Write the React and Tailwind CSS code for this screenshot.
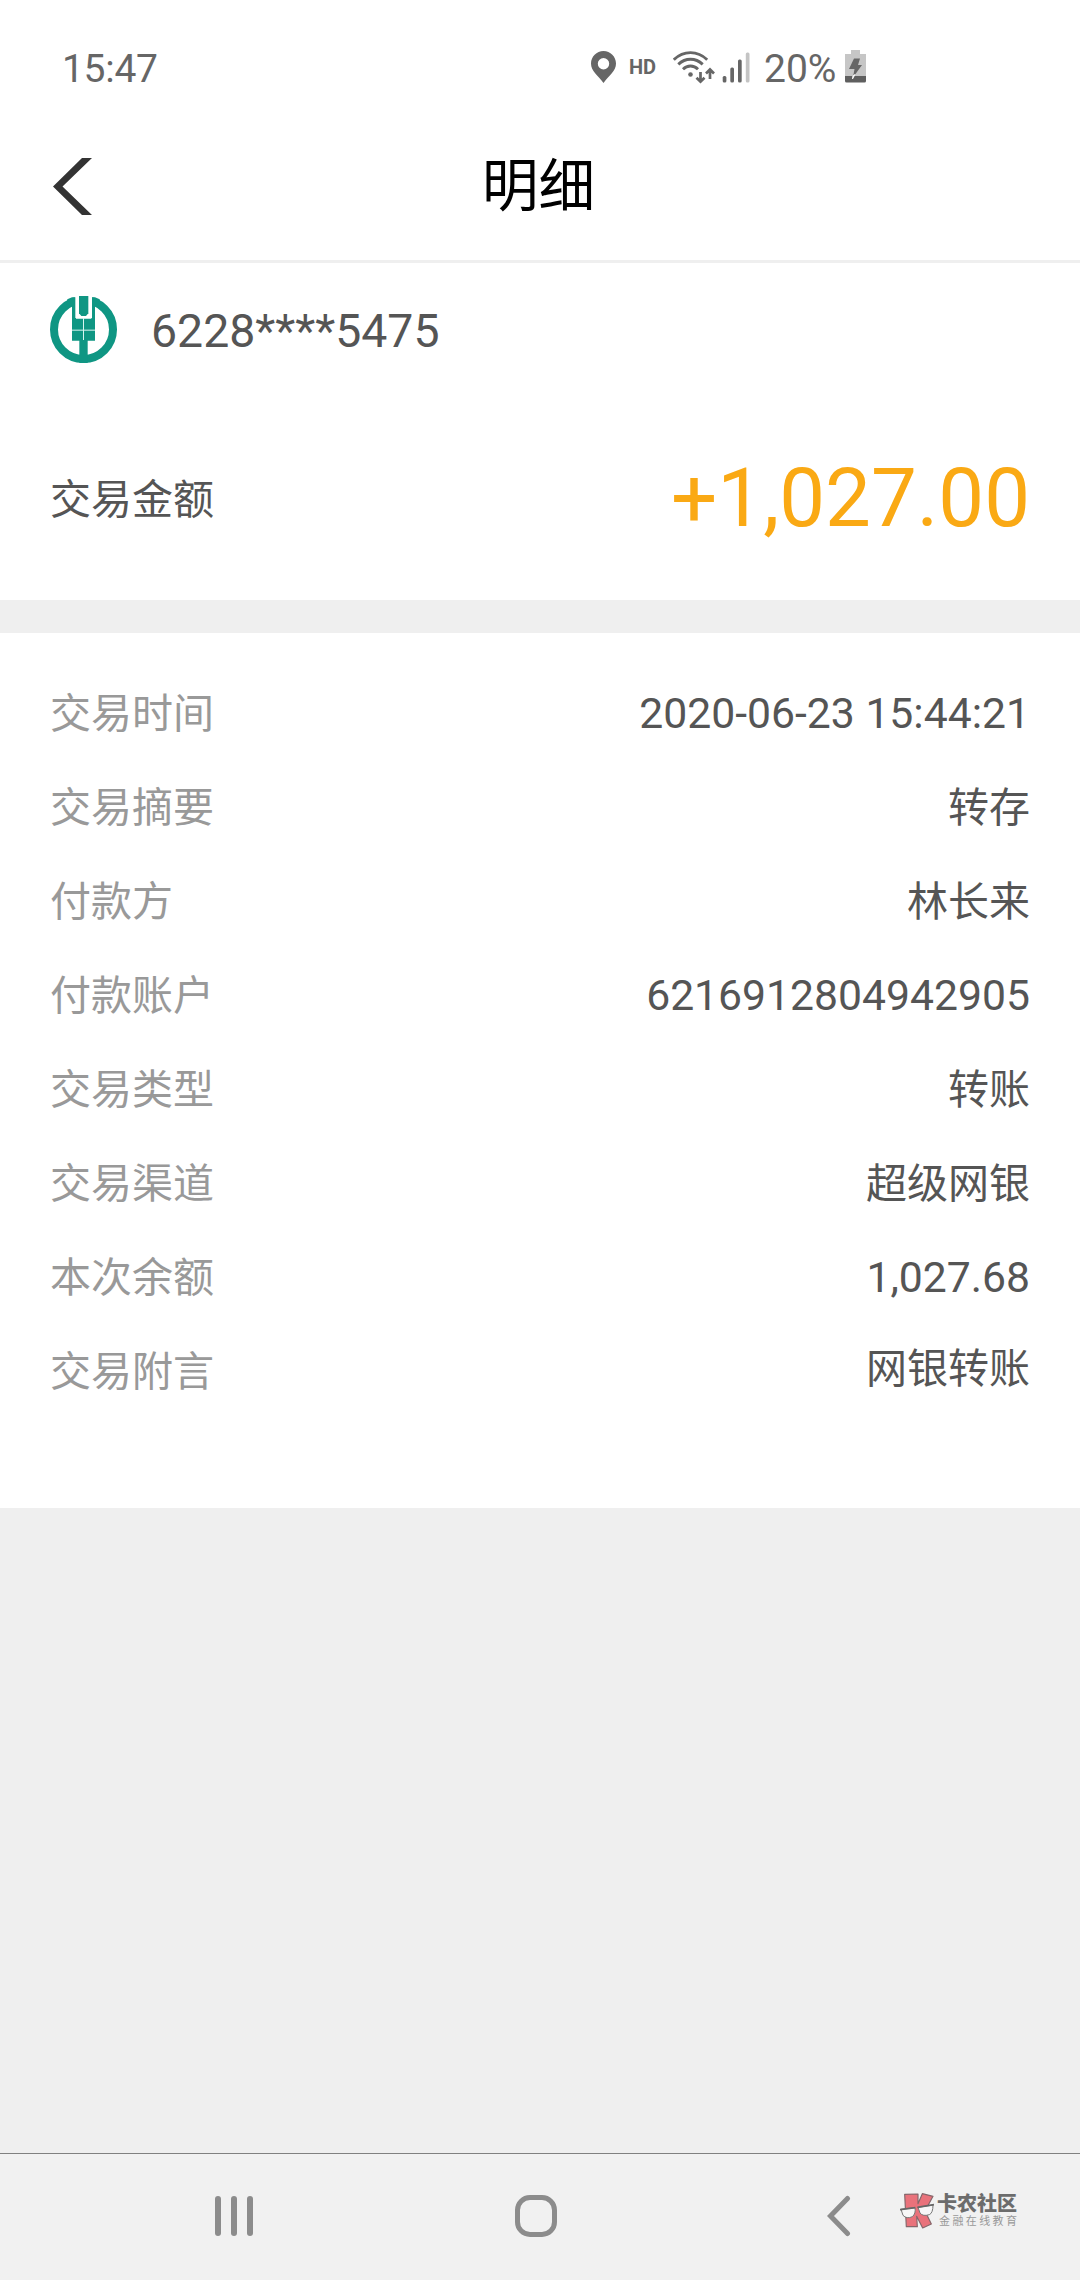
const details = [
  { label: '交易时间', value: '2020-06-23 15:44:21', numeric: true },
  { label: '交易摘要', value: '转存' },
  { label: '付款方', value: '林长来' },
  { label: '付款账户', value: '6216912804942905', numeric: true },
  { label: '交易类型', value: '转账' },
  { label: '交易渠道', value: '超级网银' },
  { label: '本次余额', value: '1,027.68', numeric: true },
  { label: '交易附言', value: '网银转账', raised: true },
];

const PinIcon = () => (
  <svg className="w-[25px] h-8" viewBox="0 0 25 32" fill="#666666">
    <path
      fillRule="evenodd"
      d="M12.5 0C5.6 0 0 5.6 0 12.5 0 20 7 24.500 12.500 32 18 24.500 25 20 25 12.500 25 5.600 19.400 0 12.500 0Zm0 7a5.700 5.700 0 1 1 0 11.400 5.700 5.700 0 0 1 0-11.400Z"
    />
  </svg>
);

const WifiIcon = () => (
  <svg className="w-[42px] h-[33px]" viewBox="0 0 42 33" fill="none" stroke="#666666">
    <g strokeWidth="2.900">
      <path d="M.8 8.700C10.500-.8 24.500-.8 34.200 8.700" />
      <path d="M5.300 13.400C12.500 6.600 22.500 6.600 29.700 13.400" />
      <path d="M10 18.200C14.300 14 20.700 14 25 18.200" />
    </g>
    <circle cx="17.500" cy="23.500" r="2.300" fill="#666666" stroke="none" />
    <g strokeWidth="2.700">
      <path d="M27.500 21v9.500M23.500 26.700l4 4 4-4" />
      <path d="M37 28v-9M33 22.500l4-4 4 4" />
    </g>
  </svg>
);

const SignalIcon = () => (
  <svg className="w-7 h-[31px]" viewBox="0 0 28 31" fill="#666666">
    <rect x="0.700" y="24" width="3.700" height="6.500" rx="1.500" />
    <rect x="8.300" y="15.500" width="3.700" height="15" rx="1.500" />
    <rect x="16" y="7.500" width="3.700" height="23" rx="1.500" />
    <rect x="23.800" y="0.500" width="3.700" height="30" rx="1.500" fill="#c4c4c4" />
  </svg>
);

const BatteryIcon = () => (
  <svg className="w-[21px] h-[33px]" viewBox="0 0 21 33">
    <path d="M6 0h9v4h6v22H0V4h6Z" fill="#c6c6c6" />
    <path d="M0 26h21v5a1.500 1.500 0 0 1-1.500 1.500h-18A1.500 1.500 0 0 1 0 31Z" fill="#5f5f5f" />
    <path d="M9 8.500h6l-2 6.500h4L8 27.500l1.500-8.500H4Z" fill="#666666" />
    <path d="M10 24.500 7.500 29l.4-3Z" fill="#fff" stroke="#fff" strokeWidth="0.800" />
  </svg>
);

const BankLogo = () => (
  <svg className="w-[67px] h-[67px]" viewBox="0 0 201 201" fill="#0f9683">
    <circle cx="100.500" cy="100.500" r="88.500" fill="none" stroke="#0f9683" strokeWidth="24" />
    <rect x="74" y="0" width="53" height="32" fill="#fff" />
    <path d="M66 4h10v62h50V4h9v130H66Z" />
    <path d="M66 4 52 10 46 40 66 30ZM135 4l14 6 6 30-20-10Z" />
    <path d="M78 0h9v52l7 10h13l8-10V0h9v68H78Z" fill="#fff" />
    <path d="M87 0h28v52l-7 8H94l-7-8Z" />
    <rect x="88" y="130" width="25" height="71" />
    <path d="M66 102.500h69M100.500 66v66" stroke="#d9f5f0" strokeWidth="3" />
  </svg>
);

const KLogo = () => (
  <svg className="w-[34px] h-9" viewBox="0 0 102 108" strokeLinejoin="round">
    <path
      d="M14 4 54 3 54 32 67 2 99 10 80 45 76 56 94 93 68 105 50 70 52 101 19 101Z"
      fill="#e9727b"
      stroke="#85666a"
      strokeWidth="3.500"
    />
    <g fill="#f7f7f7" stroke="#777777" strokeWidth="3">
      <path d="M3 49 45 44Q48 62 37 71 20 79 9 67Z" />
      <path d="M54 43 99 36Q99 60 88 65 68 71 60 60Z" />
    </g>
    <path d="M0 50 46 44M52 43 102 35" stroke="#666666" strokeWidth="5" />
  </svg>
);

const StatusBar = () => (
  <div className="flex h-[106px] items-start pl-[62px] pt-[45px] text-[#666666]">
    <span className="mt-px w-[529px] text-[39px] leading-[46px] tracking-[-0.300px]">15:47</span>
    <div className="flex items-start">
      <div className="mt-1.5"><PinIcon /></div>
      <span className="ml-[13px] mt-[10px] w-[30px] text-[20px] font-bold leading-6">HD</span>
      <div className="ml-[14px] mt-1.5"><WifiIcon /></div>
      <div className="ml-[7px] mt-[7px]"><SignalIcon /></div>
      <span className="ml-[14px] mt-px w-[81px] text-[39px] leading-[46px]">20%</span>
      <div className="mt-[5px]"><BatteryIcon /></div>
    </div>
  </div>
);

const Header = () => (
  <header className="grid h-[157px] grid-cols-3 items-center border-b-[3px] border-[#efefef]">
    <svg className="ml-[53px] mt-1.5 w-[39px] h-[57px]" viewBox="0 0 39 57" fill="#333333">
      <path d="M29 0H39L9.500 28.500 39 57H29L0 28.500Z" />
    </svg>
    <h1 className="mr-[3px] mt-2 text-center text-[56.500px] leading-[80px] text-black">明细</h1>
  </header>
);

const DetailRow = ({ label, value, numeric, raised }) => (
  <div className="flex h-[94px] items-center justify-between">
    <span className="pt-1 text-[41px] text-[#999999]">{label}</span>
    <span
      className={`text-[#555555] ${numeric ? 'text-[42.700px]' : 'pt-1 text-[41px]'} ${
        raised ? 'mb-1.5' : ''
      }`}
    >
      {value}
    </span>
  </div>
);

const NavBar = () => (
  <nav className="flex h-[127px] items-start border-t border-[#808080] bg-[#f1f1f1] pl-[215px]">
    <div className="mt-[42px] flex h-10 w-[300px] gap-[10.500px]">
      <div className="h-10 w-[5.500px] rounded-full bg-[#8c8c8c]" />
      <div className="h-10 w-[5.500px] rounded-full bg-[#8c8c8c]" />
      <div className="h-10 w-[5.500px] rounded-full bg-[#8c8c8c]" />
    </div>
    <div className="mt-[41px] h-[42px] w-[42px] rounded-[15px] border-5 border-[#8c8c8c]" />
    <svg
      className="ml-[269px] mt-[41px] h-[42px] w-[26px]"
      viewBox="0 0 26 42"
      fill="none"
      stroke="#8c8c8c"
      strokeWidth="5"
      strokeLinecap="round"
    >
      <path d="M21.500 3.500 4.500 21 21.500 38.500" />
    </svg>
    <div className="ml-12 mt-[39px] flex">
      <KLogo />
      <div className="ml-[3px]">
        <div className="text-[20px] font-black leading-[22px] text-[#6c6c6c]">卡农社区</div>
        <div className="ml-[2px] text-[11px] leading-[14px] tracking-[2.400px] text-[#999999]">金融在线教育</div>
      </div>
    </div>
  </nav>
);

const App = () => {
  return (
    <div className="flex h-[2280px] w-[1080px] flex-col overflow-hidden bg-[#efefef] font-['Roboto','Noto_Sans_CJK_SC',sans-serif]">
      <div className="bg-white">
        <StatusBar />
        <Header />
        <section className="h-[337px]">
          <div className="flex items-center pl-[50px] pt-[33px]">
            <BankLogo />
            <span className="ml-[34px] mt-0.5 text-[46.400px] leading-[54px] text-[#555555]">6228****5475</span>
          </div>
          <div className="mt-[87px] flex items-center justify-between pl-[50px] pr-[50px]">
            <span className="pt-1 text-[41px] leading-[60px] text-[#555555]">交易金额</span>
            <span className="text-[81.600px] leading-[96px] text-[#faa914]">+1,027.00</span>
          </div>
        </section>
      </div>

      <section className="mt-[33px] h-[875px] bg-white pl-[50px] pr-[50px] pt-[33px]">
        {details.map((item) => (
          <DetailRow key={item.label} {...item} />
        ))}
      </section>

      <div className="mt-auto">
        <NavBar />
      </div>
    </div>
  );
};

export default App;
